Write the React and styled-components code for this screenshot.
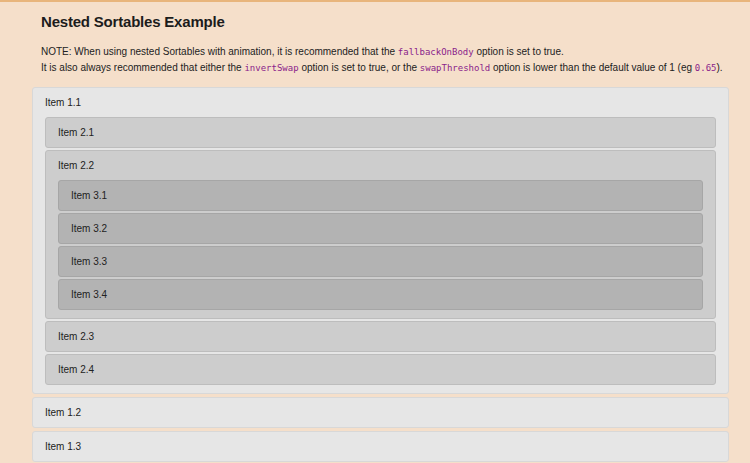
import React from 'react'
import styled, { createGlobalStyle } from 'styled-components'

const GlobalStyle = createGlobalStyle`
  html, body {
    margin: 0;
    padding: 0;
    background: #f5dfca;
  }
  body {
    font-family: 'Liberation Sans', Arial, sans-serif;
    color: #222;
    border-top: 2px solid #e8b57c;
  }
`

const Page = styled.div`
  padding: 10px 21px 0 32px;
`

const Intro = styled.div`
  padding-left: 9px;
`

const Title = styled.h1`
  margin: 0;
  font-size: 15px;
  font-weight: 700;
  letter-spacing: -0.2px;
  line-height: 20px;
  color: #1c1c1c;
`

const Note = styled.p`
  margin: 12px 0 0;
  font-size: 10px;
  line-height: 15px;
`

const Code = styled.code`
  font-family: 'DejaVu Sans Mono', 'Liberation Mono', monospace;
  font-size: 9px;
  color: #8a1d8a;
`

const List = styled.div`
  display: flex;
  flex-direction: column;
  gap: ${p => (p.$level === 1 ? 3 : 2)}px;
  margin-top: ${p => (p.$level === 1 ? 11 : 7)}px;
  margin-bottom: ${p => (p.$level === 1 ? 0 : 1)}px;
`

const shades = { 1: '#e6e6e6', 2: '#cdcdcd', 3: '#b3b3b3' }
const edges = { 1: '#d8d8d8', 2: '#bdbdbd', 3: '#a6a6a6' }

const Item = styled.div`
  background: ${p => shades[p.$level]};
  border: 1px solid ${p => edges[p.$level]};
  border-radius: 3px;
  padding: 8px 12px 7px;
  font-size: 10px;
  line-height: 14px;
  color: #222;
`

const tree = [
  {
    name: 'Item 1.1',
    children: [
      { name: 'Item 2.1' },
      {
        name: 'Item 2.2',
        children: [
          { name: 'Item 3.1' },
          { name: 'Item 3.2' },
          { name: 'Item 3.3' },
          { name: 'Item 3.4' },
        ],
      },
      { name: 'Item 2.3' },
      { name: 'Item 2.4' },
    ],
  },
  { name: 'Item 1.2' },
  { name: 'Item 1.3' },
]

function Nested({ items, level }) {
  return (
    <List $level={level}>
      {items.map(item => (
        <Item key={item.name} $level={level}>
          {item.name}
          {item.children && <Nested items={item.children} level={level + 1} />}
        </Item>
      ))}
    </List>
  )
}

export default function App() {
  return (
    <>
      <GlobalStyle />
      <Page>
        <Intro>
          <Title>Nested Sortables Example</Title>
          <Note>
            NOTE: When using nested Sortables with animation, it is recommended that the{' '}
            <Code>fallbackOnBody</Code> option is set to true.
            <br />
            It is also always recommended that either the <Code>invertSwap</Code> option is set
            to true, or the <Code>swapThreshold</Code> option is lower than the default value of 1
            (eg <Code>0.65</Code>).
          </Note>
        </Intro>
        <Nested items={tree} level={1} />
      </Page>
    </>
  )
}
